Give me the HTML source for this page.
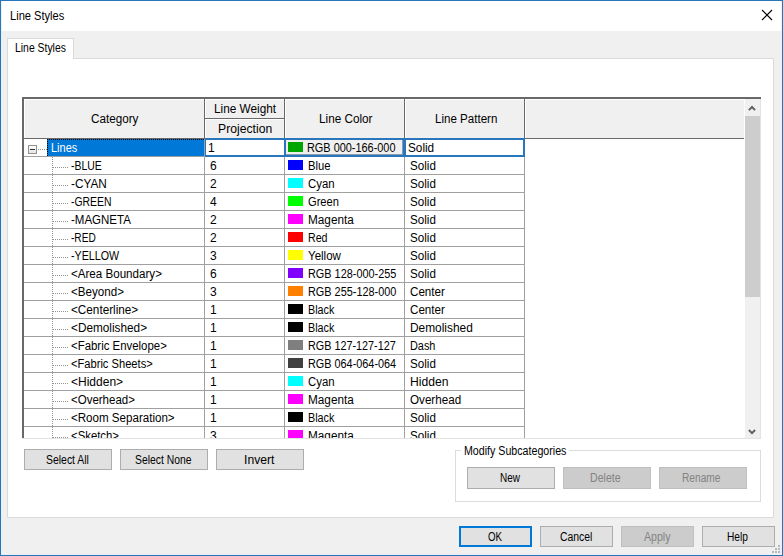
<!DOCTYPE html>
<html><head><meta charset="utf-8"><title>Line Styles</title>
<style>
html,body{margin:0;padding:0;overflow:hidden}
body{width:783px;height:556px;background:#f0f0f0;position:relative;overflow:hidden;font-family:"Liberation Sans", sans-serif;font-size:12px}
.t{position:absolute;white-space:pre;font-size:12px;line-height:14px;height:14px;font-family:"Liberation Sans", sans-serif}
#frame{position:absolute;left:0;top:0;width:783px;height:556px;box-sizing:border-box;border:1px solid #2876b8;pointer-events:none}
#frame2{position:absolute;left:1px;top:1px;width:781px;height:554px;box-sizing:border-box;border:1px solid rgba(225,240,250,0.7);border-top:none;pointer-events:none}
</style></head><body>
<div style="position:absolute;left:1px;top:1px;width:781px;height:30px;background:#fff"></div>
<svg style="position:absolute;left:760px;top:8px" width="14" height="14" viewBox="0 0 14 14"><path d="M2 2 L12 12 M12 2 L2 12" stroke="#000" stroke-width="1.1" fill="none"/></svg>
<div style="position:absolute;left:7px;top:58px;width:767px;height:460px;background:#fff;border:1px solid #dadada;box-sizing:border-box"></div>
<div style="position:absolute;left:7px;top:38px;width:67px;height:21px;background:#fff;border:1px solid #dadada;border-bottom:none;box-sizing:border-box"></div>
<div style="position:absolute;left:24px;top:99px;width:737px;height:339px;background:#fff"></div>
<div style="position:absolute;left:24px;top:99px;width:720px;height:39px;background:#f0f0f0"></div>
<div style="position:absolute;left:22px;top:97px;width:739px;height:2px;background:#696969"></div>
<div style="position:absolute;left:22px;top:97px;width:2px;height:341px;background:#696969"></div>
<div style="position:absolute;left:24px;top:138px;width:720px;height:1px;background:#696969"></div>
<div style="position:absolute;left:24px;top:99px;width:720px;height:1px;background:#fff"></div>
<div style="position:absolute;left:24px;top:99px;width:1px;height:39px;background:#fff"></div>
<div style="position:absolute;left:204px;top:99px;width:1px;height:39px;background:#696969"></div>
<div style="position:absolute;left:205px;top:99px;width:1px;height:39px;background:#fff"></div>
<div style="position:absolute;left:284px;top:99px;width:1px;height:39px;background:#696969"></div>
<div style="position:absolute;left:285px;top:99px;width:1px;height:39px;background:#fff"></div>
<div style="position:absolute;left:404px;top:99px;width:1px;height:39px;background:#696969"></div>
<div style="position:absolute;left:405px;top:99px;width:1px;height:39px;background:#fff"></div>
<div style="position:absolute;left:524px;top:99px;width:1px;height:39px;background:#696969"></div>
<div style="position:absolute;left:525px;top:99px;width:1px;height:39px;background:#fff"></div>
<div style="position:absolute;left:205px;top:118px;width:79px;height:1px;background:#696969"></div>
<div style="position:absolute;left:205px;top:119px;width:79px;height:1px;background:#fff"></div>
<div style="position:absolute;left:204px;top:139px;width:1px;height:299px;background:#a0a0a0"></div>
<div style="position:absolute;left:284px;top:139px;width:1px;height:299px;background:#a0a0a0"></div>
<div style="position:absolute;left:404px;top:139px;width:1px;height:299px;background:#a0a0a0"></div>
<div style="position:absolute;left:524px;top:139px;width:1px;height:299px;background:#a0a0a0"></div>
<div style="position:absolute;left:24px;top:156px;width:501px;height:1px;background:#a0a0a0"></div>
<div style="position:absolute;left:24px;top:174px;width:501px;height:1px;background:#a0a0a0"></div>
<div style="position:absolute;left:24px;top:192px;width:501px;height:1px;background:#a0a0a0"></div>
<div style="position:absolute;left:24px;top:210px;width:501px;height:1px;background:#a0a0a0"></div>
<div style="position:absolute;left:24px;top:228px;width:501px;height:1px;background:#a0a0a0"></div>
<div style="position:absolute;left:24px;top:246px;width:501px;height:1px;background:#a0a0a0"></div>
<div style="position:absolute;left:24px;top:264px;width:501px;height:1px;background:#a0a0a0"></div>
<div style="position:absolute;left:24px;top:282px;width:501px;height:1px;background:#a0a0a0"></div>
<div style="position:absolute;left:24px;top:300px;width:501px;height:1px;background:#a0a0a0"></div>
<div style="position:absolute;left:24px;top:318px;width:501px;height:1px;background:#a0a0a0"></div>
<div style="position:absolute;left:24px;top:336px;width:501px;height:1px;background:#a0a0a0"></div>
<div style="position:absolute;left:24px;top:354px;width:501px;height:1px;background:#a0a0a0"></div>
<div style="position:absolute;left:24px;top:372px;width:501px;height:1px;background:#a0a0a0"></div>
<div style="position:absolute;left:24px;top:390px;width:501px;height:1px;background:#a0a0a0"></div>
<div style="position:absolute;left:24px;top:408px;width:501px;height:1px;background:#a0a0a0"></div>
<div style="position:absolute;left:24px;top:426px;width:501px;height:1px;background:#a0a0a0"></div>
<div style="position:absolute;left:745px;top:99px;width:15px;height:339px;background:#f0f0f0"></div>
<div style="position:absolute;left:745px;top:116px;width:15px;height:181px;background:#cdcdcd"></div>
<div style="position:absolute;left:760px;top:99px;width:1px;height:340px;background:#e3e3e3"></div>
<svg style="position:absolute;left:744.4px;top:99px" width="16" height="17" viewBox="0 0 16 17"><path d="M4.9 11.1 L8 8 L11.1 11.1" stroke="#606060" stroke-width="2" fill="none"/></svg>
<svg style="position:absolute;left:744.4px;top:421px" width="16" height="17" viewBox="0 0 16 17"><path d="M4.9 9 L8 12.1 L11.1 9" stroke="#606060" stroke-width="2" fill="none"/></svg>
<div style="position:absolute;left:28px;top:145px;width:9px;height:9px;border:1px solid #919191;box-sizing:border-box;background:linear-gradient(#fff,#e4e4e4)"></div>
<div style="position:absolute;left:30px;top:149px;width:5px;height:1px;background:#333"></div>
<div style="position:absolute;left:38px;top:149px;width:9px;height:1px;background:repeating-linear-gradient(to right,#959595 0 1px,transparent 1px 2px)"></div>
<div style="position:absolute;left:52px;top:157px;width:1px;height:281px;background:repeating-linear-gradient(to bottom,#959595 0 1px,transparent 1px 2px)"></div>
<div style="position:absolute;left:53px;top:167px;width:15px;height:1px;background:repeating-linear-gradient(to right,#959595 0 1px,transparent 1px 2px)"></div>
<div style="position:absolute;left:53px;top:185px;width:15px;height:1px;background:repeating-linear-gradient(to right,#959595 0 1px,transparent 1px 2px)"></div>
<div style="position:absolute;left:53px;top:203px;width:15px;height:1px;background:repeating-linear-gradient(to right,#959595 0 1px,transparent 1px 2px)"></div>
<div style="position:absolute;left:53px;top:221px;width:15px;height:1px;background:repeating-linear-gradient(to right,#959595 0 1px,transparent 1px 2px)"></div>
<div style="position:absolute;left:53px;top:239px;width:15px;height:1px;background:repeating-linear-gradient(to right,#959595 0 1px,transparent 1px 2px)"></div>
<div style="position:absolute;left:53px;top:257px;width:15px;height:1px;background:repeating-linear-gradient(to right,#959595 0 1px,transparent 1px 2px)"></div>
<div style="position:absolute;left:53px;top:275px;width:15px;height:1px;background:repeating-linear-gradient(to right,#959595 0 1px,transparent 1px 2px)"></div>
<div style="position:absolute;left:53px;top:293px;width:15px;height:1px;background:repeating-linear-gradient(to right,#959595 0 1px,transparent 1px 2px)"></div>
<div style="position:absolute;left:53px;top:311px;width:15px;height:1px;background:repeating-linear-gradient(to right,#959595 0 1px,transparent 1px 2px)"></div>
<div style="position:absolute;left:53px;top:329px;width:15px;height:1px;background:repeating-linear-gradient(to right,#959595 0 1px,transparent 1px 2px)"></div>
<div style="position:absolute;left:53px;top:347px;width:15px;height:1px;background:repeating-linear-gradient(to right,#959595 0 1px,transparent 1px 2px)"></div>
<div style="position:absolute;left:53px;top:365px;width:15px;height:1px;background:repeating-linear-gradient(to right,#959595 0 1px,transparent 1px 2px)"></div>
<div style="position:absolute;left:53px;top:383px;width:15px;height:1px;background:repeating-linear-gradient(to right,#959595 0 1px,transparent 1px 2px)"></div>
<div style="position:absolute;left:53px;top:401px;width:15px;height:1px;background:repeating-linear-gradient(to right,#959595 0 1px,transparent 1px 2px)"></div>
<div style="position:absolute;left:53px;top:419px;width:15px;height:1px;background:repeating-linear-gradient(to right,#959595 0 1px,transparent 1px 2px)"></div>
<div style="position:absolute;left:53px;top:437px;width:15px;height:1px;background:repeating-linear-gradient(to right,#959595 0 1px,transparent 1px 2px)"></div>
<div style="position:absolute;left:47px;top:139px;width:157px;height:17px;background:#0078d7;border:1px dotted #000;box-sizing:border-box;border-right:none;border-bottom:none"></div>
<div style="position:absolute;left:205px;top:138px;width:320px;height:19px;border:2px solid #2a76bc;box-sizing:border-box;border-left-width:1px;background:#fff"></div>
<div style="position:absolute;left:284px;top:138px;width:2px;height:19px;background:#2a76bc"></div>
<div style="position:absolute;left:403px;top:138px;width:3px;height:19px;background:#2a76bc"></div>
<div style="position:absolute;left:286px;top:140px;width:117px;height:15px;background:#f0f0f0;border-right:1px solid #8a9cb0;border-bottom:1px solid #8a9cb0;box-sizing:border-box"></div>
<div style="position:absolute;left:288px;top:142px;width:15px;height:10px;background:#00a600"></div>
<div style="position:absolute;left:288px;top:160px;width:15px;height:10px;background:#0000ff"></div>
<div style="position:absolute;left:288px;top:178px;width:15px;height:10px;background:#00ffff"></div>
<div style="position:absolute;left:288px;top:196px;width:15px;height:10px;background:#00ff00"></div>
<div style="position:absolute;left:288px;top:214px;width:15px;height:10px;background:#ff00ff"></div>
<div style="position:absolute;left:288px;top:232px;width:15px;height:10px;background:#ff0000"></div>
<div style="position:absolute;left:288px;top:250px;width:15px;height:10px;background:#ffff00"></div>
<div style="position:absolute;left:288px;top:268px;width:15px;height:10px;background:#8000ff"></div>
<div style="position:absolute;left:288px;top:286px;width:15px;height:10px;background:#ff8000"></div>
<div style="position:absolute;left:288px;top:304px;width:15px;height:10px;background:#000000"></div>
<div style="position:absolute;left:288px;top:322px;width:15px;height:10px;background:#000000"></div>
<div style="position:absolute;left:288px;top:340px;width:15px;height:10px;background:#7f7f7f"></div>
<div style="position:absolute;left:288px;top:358px;width:15px;height:10px;background:#404040"></div>
<div style="position:absolute;left:288px;top:376px;width:15px;height:10px;background:#00ffff"></div>
<div style="position:absolute;left:288px;top:394px;width:15px;height:10px;background:#ff00ff"></div>
<div style="position:absolute;left:288px;top:412px;width:15px;height:10px;background:#000000"></div>
<div style="position:absolute;left:288px;top:430px;width:15px;height:8px;background:#ff00ff"></div>
<div style="position:absolute;left:24px;top:449px;width:88px;height:21px;background:#e1e1e1;border:1px solid #adadad;box-sizing:border-box"></div>
<div style="position:absolute;left:120px;top:449px;width:88px;height:21px;background:#e1e1e1;border:1px solid #adadad;box-sizing:border-box"></div>
<div style="position:absolute;left:216px;top:449px;width:88px;height:21px;background:#e1e1e1;border:1px solid #adadad;box-sizing:border-box"></div>
<div style="position:absolute;left:455px;top:450px;width:306px;height:52px;border:1px solid #dcdcdc;box-sizing:border-box"></div>
<div style="position:absolute;left:461px;top:448px;width:108px;height:5px;background:#fff"></div>
<div style="position:absolute;left:467px;top:467px;width:88px;height:22px;background:#e1e1e1;border:1px solid #adadad;box-sizing:border-box"></div>
<div style="position:absolute;left:563px;top:467px;width:88px;height:22px;background:#cccccc;border:1px solid #bfbfbf;box-sizing:border-box"></div>
<div style="position:absolute;left:659px;top:467px;width:88px;height:22px;background:#cccccc;border:1px solid #bfbfbf;box-sizing:border-box"></div>
<div style="position:absolute;left:459px;top:526px;width:73px;height:21px;background:#e1e1e1;border:2px solid #0078d7;box-sizing:border-box"></div>
<div style="position:absolute;left:540px;top:526px;width:73px;height:21px;background:#e1e1e1;border:1px solid #adadad;box-sizing:border-box"></div>
<div style="position:absolute;left:621px;top:526px;width:73px;height:21px;background:#cccccc;border:1px solid #bfbfbf;box-sizing:border-box"></div>
<div style="position:absolute;left:702px;top:526px;width:73px;height:21px;background:#e1e1e1;border:1px solid #adadad;box-sizing:border-box"></div>
<div style="position:absolute;left:778px;top:545px;width:2px;height:2px;background:#b6babc"></div>
<div style="position:absolute;left:775px;top:548px;width:2px;height:2px;background:#b6babc"></div>
<div style="position:absolute;left:778px;top:548px;width:2px;height:2px;background:#b6babc"></div>
<div style="position:absolute;left:772px;top:551px;width:2px;height:2px;background:#b6babc"></div>
<div style="position:absolute;left:775px;top:551px;width:2px;height:2px;background:#b6babc"></div>
<div style="position:absolute;left:778px;top:551px;width:2px;height:2px;background:#b6babc"></div>
<div style="position:absolute;left:22px;top:438px;width:740px;height:10px;background:#fff"></div>
<div style="position:absolute;left:22px;top:438px;width:739px;height:1px;background:#e3e3e3"></div>
<div id="gridtext" style="position:absolute;left:0;top:0;width:783px;height:438px;overflow:hidden">
<span class="t" style="left:9.60px;top:9px;transform:scaleX(0.9251);transform-origin:0 0;color:#000">Line Styles</span>
<span class="t" style="left:14.60px;top:41px;transform:scaleX(0.8671);transform-origin:0 0;color:#000">Line Styles</span>
<span class="t" style="left:91.30px;top:112px;transform:scaleX(0.9735);transform-origin:0 0;color:#000">Category</span>
<span class="t" style="left:214.30px;top:102px;transform:scaleX(0.9825);transform-origin:0 0;color:#000">Line Weight</span>
<span class="t" style="left:218.40px;top:122px;transform:scaleX(1.0154);transform-origin:0 0;color:#000">Projection</span>
<span class="t" style="left:318.50px;top:112px;transform:scaleX(0.9780);transform-origin:0 0;color:#000">Line Color</span>
<span class="t" style="left:434.50px;top:112px;transform:scaleX(0.9635);transform-origin:0 0;color:#000">Line Pattern</span>
<span class="t" style="left:50.90px;top:141px;transform:scaleX(0.9133);transform-origin:0 0;color:#fff">Lines</span>
<span class="t" style="left:208.00px;top:141px;color:#000">1</span>
<span class="t" style="left:307.40px;top:141px;transform:scaleX(0.9087);transform-origin:0 0;color:#000">RGB 000-166-000</span>
<span class="t" style="left:408.00px;top:141px;transform:scaleX(0.9804);transform-origin:0 0;color:#000">Solid</span>
<span class="t" style="left:70.80px;top:159px;transform:scaleX(0.8687);transform-origin:0 0;color:#000">-BLUE</span>
<span class="t" style="left:210.00px;top:159px;color:#000">6</span>
<span class="t" style="left:307.60px;top:159px;transform:scaleX(0.9366);transform-origin:0 0;color:#000">Blue</span>
<span class="t" style="left:410.40px;top:159px;transform:scaleX(0.9689);transform-origin:0 0;color:#000">Solid</span>
<span class="t" style="left:70.80px;top:177px;transform:scaleX(0.9838);transform-origin:0 0;color:#000">-CYAN</span>
<span class="t" style="left:210.00px;top:177px;color:#000">2</span>
<span class="t" style="left:307.60px;top:177px;transform:scaleX(0.9473);transform-origin:0 0;color:#000">Cyan</span>
<span class="t" style="left:410.40px;top:177px;transform:scaleX(0.9689);transform-origin:0 0;color:#000">Solid</span>
<span class="t" style="left:70.80px;top:195px;transform:scaleX(0.8673);transform-origin:0 0;color:#000">-GREEN</span>
<span class="t" style="left:210.00px;top:195px;color:#000">4</span>
<span class="t" style="left:307.60px;top:195px;transform:scaleX(0.9272);transform-origin:0 0;color:#000">Green</span>
<span class="t" style="left:410.40px;top:195px;transform:scaleX(0.9689);transform-origin:0 0;color:#000">Solid</span>
<span class="t" style="left:70.80px;top:213px;transform:scaleX(0.9593);transform-origin:0 0;color:#000">-MAGNETA</span>
<span class="t" style="left:210.00px;top:213px;color:#000">2</span>
<span class="t" style="left:307.60px;top:213px;transform:scaleX(0.9803);transform-origin:0 0;color:#000">Magenta</span>
<span class="t" style="left:410.40px;top:213px;transform:scaleX(0.9689);transform-origin:0 0;color:#000">Solid</span>
<span class="t" style="left:70.80px;top:231px;transform:scaleX(0.8427);transform-origin:0 0;color:#000">-RED</span>
<span class="t" style="left:210.00px;top:231px;color:#000">2</span>
<span class="t" style="left:307.60px;top:231px;transform:scaleX(0.8857);transform-origin:0 0;color:#000">Red</span>
<span class="t" style="left:410.40px;top:231px;transform:scaleX(0.9689);transform-origin:0 0;color:#000">Solid</span>
<span class="t" style="left:70.80px;top:249px;transform:scaleX(0.8905);transform-origin:0 0;color:#000">-YELLOW</span>
<span class="t" style="left:210.00px;top:249px;color:#000">3</span>
<span class="t" style="left:307.60px;top:249px;transform:scaleX(0.9600);transform-origin:0 0;color:#000">Yellow</span>
<span class="t" style="left:410.40px;top:249px;transform:scaleX(0.9689);transform-origin:0 0;color:#000">Solid</span>
<span class="t" style="left:71.30px;top:267px;transform:scaleX(0.9664);transform-origin:0 0;color:#000">&lt;Area Boundary&gt;</span>
<span class="t" style="left:210.00px;top:267px;color:#000">6</span>
<span class="t" style="left:307.60px;top:267px;transform:scaleX(0.9067);transform-origin:0 0;color:#000">RGB 128-000-255</span>
<span class="t" style="left:410.40px;top:267px;transform:scaleX(0.9689);transform-origin:0 0;color:#000">Solid</span>
<span class="t" style="left:71.30px;top:285px;transform:scaleX(0.9670);transform-origin:0 0;color:#000">&lt;Beyond&gt;</span>
<span class="t" style="left:210.00px;top:285px;color:#000">3</span>
<span class="t" style="left:307.60px;top:285px;transform:scaleX(0.9067);transform-origin:0 0;color:#000">RGB 255-128-000</span>
<span class="t" style="left:410.40px;top:285px;transform:scaleX(0.9689);transform-origin:0 0;color:#000">Center</span>
<span class="t" style="left:71.30px;top:303px;transform:scaleX(0.9781);transform-origin:0 0;color:#000">&lt;Centerline&gt;</span>
<span class="t" style="left:210.00px;top:303px;color:#000">1</span>
<span class="t" style="left:307.60px;top:303px;transform:scaleX(0.8964);transform-origin:0 0;color:#000">Black</span>
<span class="t" style="left:410.40px;top:303px;transform:scaleX(0.9689);transform-origin:0 0;color:#000">Center</span>
<span class="t" style="left:71.30px;top:321px;transform:scaleX(0.9823);transform-origin:0 0;color:#000">&lt;Demolished&gt;</span>
<span class="t" style="left:210.00px;top:321px;color:#000">1</span>
<span class="t" style="left:307.60px;top:321px;transform:scaleX(0.8964);transform-origin:0 0;color:#000">Black</span>
<span class="t" style="left:410.40px;top:321px;transform:scaleX(0.9906);transform-origin:0 0;color:#000">Demolished</span>
<span class="t" style="left:71.30px;top:339px;transform:scaleX(0.9511);transform-origin:0 0;color:#000">&lt;Fabric Envelope&gt;</span>
<span class="t" style="left:210.00px;top:339px;color:#000">1</span>
<span class="t" style="left:307.60px;top:339px;transform:scaleX(0.9005);transform-origin:0 0;color:#000">RGB 127-127-127</span>
<span class="t" style="left:410.40px;top:339px;transform:scaleX(0.9071);transform-origin:0 0;color:#000">Dash</span>
<span class="t" style="left:71.30px;top:357px;transform:scaleX(0.9280);transform-origin:0 0;color:#000">&lt;Fabric Sheets&gt;</span>
<span class="t" style="left:210.00px;top:357px;color:#000">1</span>
<span class="t" style="left:307.60px;top:357px;transform:scaleX(0.9046);transform-origin:0 0;color:#000">RGB 064-064-064</span>
<span class="t" style="left:410.40px;top:357px;transform:scaleX(0.9689);transform-origin:0 0;color:#000">Solid</span>
<span class="t" style="left:71.30px;top:375px;transform:scaleX(1.0012);transform-origin:0 0;color:#000">&lt;Hidden&gt;</span>
<span class="t" style="left:210.00px;top:375px;color:#000">1</span>
<span class="t" style="left:307.60px;top:375px;transform:scaleX(0.9473);transform-origin:0 0;color:#000">Cyan</span>
<span class="t" style="left:410.40px;top:375px;transform:scaleX(1.0120);transform-origin:0 0;color:#000">Hidden</span>
<span class="t" style="left:71.30px;top:393px;transform:scaleX(0.9579);transform-origin:0 0;color:#000">&lt;Overhead&gt;</span>
<span class="t" style="left:210.00px;top:393px;color:#000">1</span>
<span class="t" style="left:307.60px;top:393px;transform:scaleX(0.9803);transform-origin:0 0;color:#000">Magenta</span>
<span class="t" style="left:410.40px;top:393px;transform:scaleX(0.9707);transform-origin:0 0;color:#000">Overhead</span>
<span class="t" style="left:71.30px;top:411px;transform:scaleX(0.9647);transform-origin:0 0;color:#000">&lt;Room Separation&gt;</span>
<span class="t" style="left:210.00px;top:411px;color:#000">1</span>
<span class="t" style="left:307.60px;top:411px;transform:scaleX(0.8964);transform-origin:0 0;color:#000">Black</span>
<span class="t" style="left:410.40px;top:411px;transform:scaleX(0.9689);transform-origin:0 0;color:#000">Solid</span>
<span class="t" style="left:71.30px;top:429px;transform:scaleX(0.9469);transform-origin:0 0;color:#000">&lt;Sketch&gt;</span>
<span class="t" style="left:210.00px;top:429px;color:#000">3</span>
<span class="t" style="left:307.60px;top:429px;transform:scaleX(0.9803);transform-origin:0 0;color:#000">Magenta</span>
<span class="t" style="left:410.40px;top:429px;transform:scaleX(0.9689);transform-origin:0 0;color:#000">Solid</span>
</div>
<span class="t" style="left:45.75px;top:453px;transform:scaleX(0.8692);transform-origin:0 0;color:#000">Select All</span>
<span class="t" style="left:134.65px;top:453px;transform:scaleX(0.8630);transform-origin:0 0;color:#000">Select None</span>
<span class="t" style="left:243.74px;top:453px;transform:scaleX(1.0142);transform-origin:0 0;color:#000">Invert</span>
<span class="t" style="left:499.90px;top:471px;transform:scaleX(0.8299);transform-origin:0 0;color:#000">New</span>
<span class="t" style="left:590.15px;top:471px;transform:scaleX(0.8825);transform-origin:0 0;color:#838383">Delete</span>
<span class="t" style="left:682.30px;top:471px;transform:scaleX(0.8493);transform-origin:0 0;color:#838383">Rename</span>
<span class="t" style="left:487.60px;top:530px;transform:scaleX(0.8077);transform-origin:0 0;color:#000">OK</span>
<span class="t" style="left:559.50px;top:530px;transform:scaleX(0.8668);transform-origin:0 0;color:#000">Cancel</span>
<span class="t" style="left:643.95px;top:530px;transform:scaleX(0.8828);transform-origin:0 0;color:#838383">Apply</span>
<span class="t" style="left:727.10px;top:530px;transform:scaleX(0.8478);transform-origin:0 0;color:#000">Help</span>
<span class="t" style="left:463.80px;top:444px;transform:scaleX(0.8874);transform-origin:0 0;color:#000">Modify Subcategories</span>
<div id="frame2"></div><div id="frame"></div>
</body></html>
